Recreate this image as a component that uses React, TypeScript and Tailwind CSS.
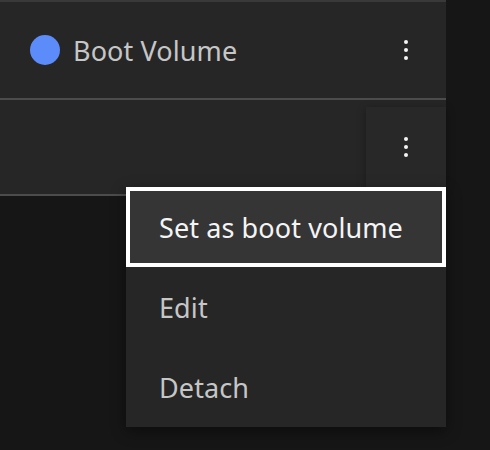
const font = { fontFamily: '"Noto Sans", "Open Sans", sans-serif' };

function Kebab() {
  return (
    <div className="flex flex-col items-center gap-1">
      <span className="block size-1 rounded-full bg-[#f4f4f4]" />
      <span className="block size-1 rounded-full bg-[#f4f4f4]" />
      <span className="block size-1 rounded-full bg-[#f4f4f4]" />
    </div>
  );
}

export default function App() {
  return (
    <div className="relative flex h-[450px] w-[490px] bg-[#161616]" style={font}>
      {/* Table */}
      <div className="flex w-[446px] flex-col">
        <div className="h-[2px] bg-[#393939]" />
        <div className="flex h-[96px] items-center bg-[#262626]">
          <div className="flex flex-1 items-center gap-[13px] pl-[30px]">
            <span className="block size-[30px] rounded-full bg-[#5b8cfa]" />
            <span className="text-[27px] leading-none tracking-[0.1px] text-[#c6c6c6]">Boot Volume</span>
          </div>
          <div className="flex h-full w-[80px] items-center justify-center">
            <Kebab />
          </div>
        </div>
        <div className="h-[2px] bg-[#4c4c4c]" />
        <div className="h-[94px] bg-[#262626]" />
        <div className="h-[2px] bg-[#4c4c4c]" />
      </div>

      {/* Open overflow trigger */}
      <div className="absolute left-[366px] top-[107px] flex h-[80px] w-[80px] items-center justify-center bg-[#282828] shadow-[0_2px_8px_rgba(0,0,0,0.35)]">
        <Kebab />
      </div>

      {/* Menu */}
      <div className="absolute left-[126px] top-[187px] w-[320px] bg-[#262626] shadow-[0_4px_14px_rgba(0,0,0,0.45)]">
        <div className="flex h-[80px] items-center border-4 border-white bg-[#353535] pl-[29px] text-[27px] leading-none tracking-[0.1px] text-[#f4f4f4]">
          Set as boot volume
        </div>
        <div className="flex h-[80px] items-center pl-[33px] text-[27px] leading-none tracking-[0.1px] text-[#c6c6c6]">
          Edit
        </div>
        <div className="flex h-[80px] items-center pl-[33px] text-[27px] leading-none tracking-[0.1px] text-[#c6c6c6]">
          Detach
        </div>
      </div>
    </div>
  );
}
